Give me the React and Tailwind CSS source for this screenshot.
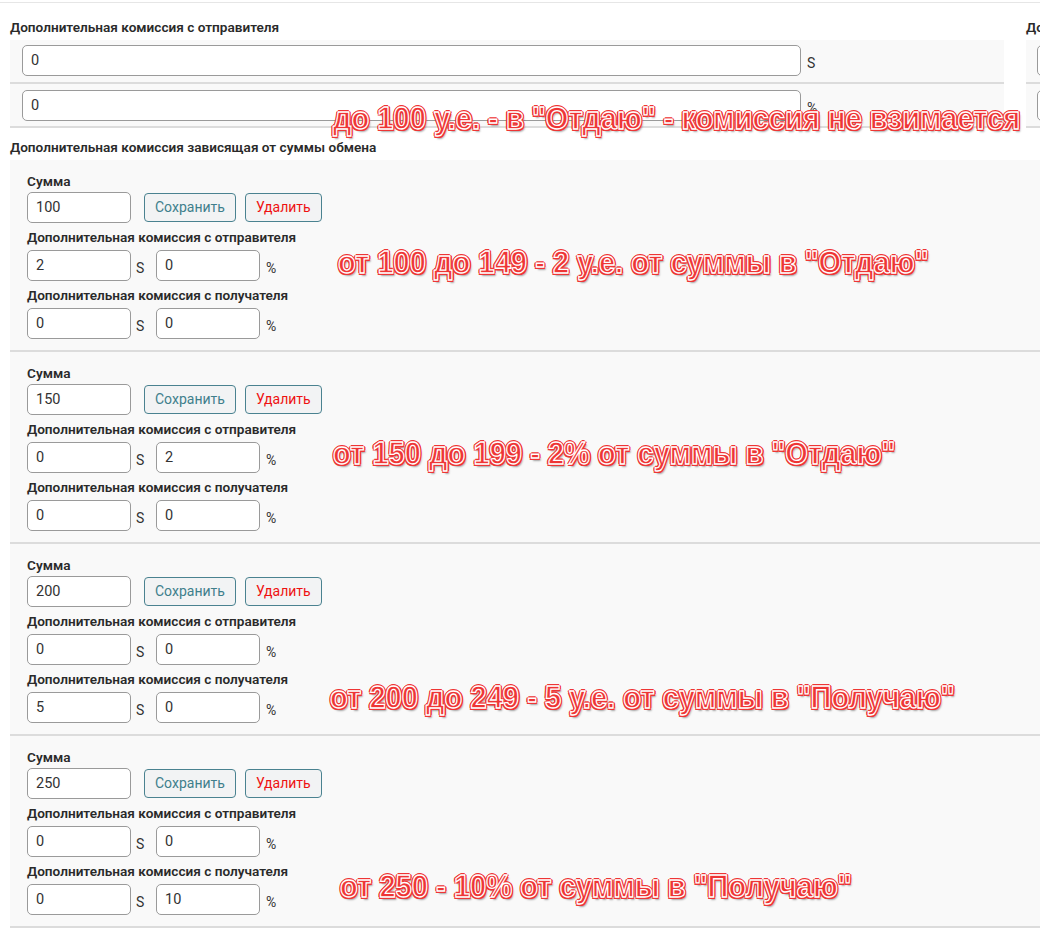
import React from 'react'

const font = { fontFamily: 'Roboto, "Open Sans", sans-serif' }

function Field({ value, w = 'w-[104px]' }) {
  return (
    <input
      readOnly
      value={value}
      className={`${w} h-[31px] shrink-0 rounded-[5px] border border-[#9a9a9a] bg-white px-[8px] text-[14.5px] text-[#333] outline-none`}
    />
  )
}

function Note({ children, className }) {
  return (
    <div
      className={`absolute whitespace-nowrap text-[32px] font-bold leading-[36px] text-[#ee3535] origin-left [transform:scaleX(0.91)] [-webkit-text-stroke:1.3px_white] ${className}`}
      style={{
        fontFamily: '"Liberation Sans", Arial, sans-serif',
        textShadow:
          '2px 0 0 #ee3535, -2px 0 0 #ee3535, 0 2px 0 #ee3535, 0 -2px 0 #ee3535, 1.5px 1.5px 0 #ee3535, -1.5px -1.5px 0 #ee3535, 1.5px -1.5px 0 #ee3535, -1.5px 1.5px 0 #ee3535, 2px 3px 2px rgba(0,0,0,0.35)',
      }}
    >
      {children}
    </div>
  )
}

const label = 'text-[13.6px] font-semibold leading-[16px] text-[#2a2a2a] whitespace-nowrap'

function Tier({ sum, s1, p1, s2, p2 }) {
  return (
    <div className="border-b-2 border-[#dcdcdc] pl-[17px] pt-[13px] pb-[11px]">
      <div className={label}>Сумма</div>
      <div className="mt-[3px] flex items-start">
        <Field value={sum} />
        <button className="ml-[13px] mt-[1px] h-[29px] rounded-[4px] border border-[#4a8290] bg-[#f2f3f4] px-[10px] text-[14px] text-[#3f7f8c]">Сохранить</button>
        <button className="ml-[9px] mt-[1px] h-[29px] rounded-[4px] border border-[#4a8290] bg-[#f2f3f4] px-[10px] text-[14px] text-[#ee1111]">Удалить</button>
      </div>
      <div className={`mt-[6px] ${label}`}>Дополнительная комиссия с отправителя</div>
      <div className="mt-[5px] flex items-center">
        <Field value={s1} />
        <span className="ml-[5px] w-[20px] pt-[6px] text-[14px] text-[#333]">S</span>
        <Field value={p1} />
        <span className="ml-[6px] pt-[6px] text-[14px] text-[#333]">%</span>
      </div>
      <div className={`mt-[6px] ${label}`}>Дополнительная комиссия с получателя</div>
      <div className="mt-[5px] flex items-center">
        <Field value={s2} />
        <span className="ml-[5px] w-[20px] pt-[6px] text-[14px] text-[#333]">S</span>
        <Field value={p2} />
        <span className="ml-[6px] pt-[6px] text-[14px] text-[#333]">%</span>
      </div>
    </div>
  )
}

export default function App() {
  const tiers = [
    { sum: '100', s1: '2', p1: '0', s2: '0', p2: '0' },
    { sum: '150', s1: '0', p1: '2', s2: '0', p2: '0' },
    { sum: '200', s1: '0', p1: '0', s2: '5', p2: '0' },
    { sum: '250', s1: '0', p1: '0', s2: '0', p2: '10' },
  ]

  return (
    <div className="relative h-[934px] w-[1040px] overflow-hidden bg-white" style={font}>
      <div className="mt-[2px] border-t border-[#e6e6e6]" />
      <div className="flex pt-[16px]">
        <div className="ml-[10px] w-[994px] shrink-0">
          <div className={label}>Дополнительная комиссия с отправителя</div>
          <div className="mt-[5px] bg-[#f9f9f9]">
            <div className="flex border-b-2 border-[#dcdcdc] pl-[12px] pt-[5px] pb-[6px]">
              <Field value="0" w="w-[779px]" />
              <span className="ml-[6px] pt-[8px] text-[14px] text-[#333]">S</span>
            </div>
            <div className="flex border-b-2 border-[#dcdcdc] pl-[12px] pt-[6px] pb-[5px]">
              <Field value="0" w="w-[779px]" />
              <span className="ml-[6px] pt-[8px] text-[14px] text-[#333]">%</span>
            </div>
          </div>
        </div>
        <div className="ml-[22px] w-[400px] shrink-0">
          <div className={label}>Дополнительная комиссия с получателя</div>
          <div className="mt-[5px] bg-[#f9f9f9]">
            <div className="flex border-b-2 border-[#dcdcdc] pl-[11px] pt-[5px] pb-[6px]">
              <Field value="0" w="w-[779px]" />
            </div>
            <div className="flex border-b-2 border-[#dcdcdc] pl-[11px] pt-[6px] pb-[5px]">
              <Field value="0" w="w-[779px]" />
            </div>
          </div>
        </div>
      </div>

      <div className={`ml-[10px] mt-[11px] ${label}`}>
        Дополнительная комиссия зависящая от суммы обмена
      </div>
      <div className="ml-[10px] mt-[5px] bg-[#f9f9f9]">
        {tiers.map(t => (
          <Tier key={t.sum} {...t} />
        ))}
      </div>

      <Note className="left-[333px] top-[100px]">до 100 у.е. - в "Отдаю" - комиссия не взимается</Note>
      <Note className="left-[338px] top-[244px]">от 100 до 149 - 2 у.е. от суммы в "Отдаю"</Note>
      <Note className="left-[333px] top-[435px]">от 150 до 199 - 2% от суммы в "Отдаю"</Note>
      <Note className="left-[330px] top-[679px]">от 200 до 249 - 5 у.е. от суммы в "Получаю"</Note>
      <Note className="left-[340px] top-[868px]">от 250 - 10% от суммы в "Получаю"</Note>
    </div>
  )
}
